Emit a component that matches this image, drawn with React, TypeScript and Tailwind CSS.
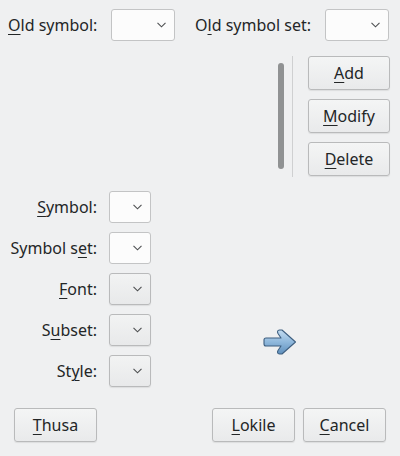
import React from 'react';

const font = { fontFamily: '"Noto Sans", "DejaVu Sans", sans-serif' };

function Chevron() {
  return (
    <svg width="9" height="6" viewBox="0 0 9 6" className="shrink-0">
      <path d="M0.5 0.8 L4.5 4.8 L8.5 0.8" fill="none" stroke="#4d4f51" strokeWidth="1.1" />
    </svg>
  );
}

function Mnemonic({ text, at }: { text: string; at: number }) {
  return (
    <>
      {text.slice(0, at)}
      <span className="underline underline-offset-[3px] decoration-1">{text[at]}</span>
      {text.slice(at + 1)}
    </>
  );
}

function Combo({ editable, className = '' }: { editable?: boolean; className?: string }) {
  return (
    <div
      className={`flex items-center justify-end pr-[8px] h-[32px] rounded-[3px] border ${
        editable
          ? 'bg-[#fcfcfc] border-[#c3c4c5]'
          : 'bg-gradient-to-b from-[#f2f3f3] to-[#e8e9ea] border-[#b9babb] shadow-[0_1px_1px_rgba(0,0,0,0.08)]'
      } ${className}`}
    >
      <Chevron />
    </div>
  );
}

function Button({ label, at, className = '' }: { label: string; at: number; className?: string }) {
  return (
    <button
      className={`h-[34px] rounded-[3px] border border-[#b9babb] bg-gradient-to-b from-[#f4f5f5] to-[#e9eaeb] shadow-[0_1px_1px_rgba(0,0,0,0.08)] text-[16px] text-[#232627] ${className}`}
    >
      <Mnemonic text={label} at={at} />
    </button>
  );
}

function Arrow() {
  return (
    <svg width="34" height="30" viewBox="0 0 34 30">
      <defs>
        <linearGradient id="ag" x1="0" y1="0" x2="0" y2="1">
          <stop offset="0" stopColor="#c4dcf0" />
          <stop offset="0.5" stopColor="#8fb8dc" />
          <stop offset="1" stopColor="#5f90bd" />
        </linearGradient>
      </defs>
      <path
        d="M3 11 H18 L15 6.5 Q13.5 3.5 16.5 3 L19 3 L32.5 15 L19 27 L16.5 27 Q13.5 26.5 15 23.5 L18 19 H3 Q1 19 1 17 V13 Q1 11 3 11 Z"
        fill="url(#ag)"
        stroke="#3e5f80"
        strokeWidth="1.1"
        strokeLinejoin="round"
      />
    </svg>
  );
}

const rows: { label: string; at: number; editable: boolean }[] = [
  { label: 'Symbol:', at: 0, editable: true },
  { label: 'Symbol set:', at: 8, editable: true },
  { label: 'Font:', at: 0, editable: false },
  { label: 'Subset:', at: 1, editable: false },
  { label: 'Style:', at: 2, editable: false },
];

export default function App() {
  return (
    <div className="w-[400px] h-[456px] bg-[#eff0f1] text-[#232627] text-[16px] flex flex-col" style={font}>
      {/* top row */}
      <div className="flex items-center pt-[9px] pl-[8px] h-[41px]">
        <span className="w-[103px]">
          <Mnemonic text="Old symbol:" at={0} />
        </span>
        <Combo editable className="w-[64px]" />
        <span className="ml-[20px] w-[130px]">
          <Mnemonic text="Old symbol set:" at={1} />
        </span>
        <Combo editable className="w-[64px]" />
      </div>

      {/* list + buttons */}
      <div className="flex mt-[15px] h-[121px]">
        <div className="flex-1" />
        <div className="w-[6px] mt-[7px] h-[106px] rounded-[3px] bg-[#909293]" />
        <div className="w-px ml-[8px] bg-[#cfd0d1]" />
        <div className="flex flex-col gap-[9px] ml-[15px] w-[82px] mr-[10px]">
          <Button label="Add" at={0} />
          <Button label="Modify" at={0} />
          <Button label="Delete" at={0} />
        </div>
      </div>

      {/* form */}
      <div className="flex mt-[14px]">
        <div className="flex flex-col gap-[9px] w-[151px]">
          {rows.map((r) => (
            <div key={r.label} className="flex items-center h-[32px]">
              <span className="w-[97px] text-right whitespace-nowrap">
                <Mnemonic text={r.label} at={r.at} />
              </span>
              <Combo editable={r.editable} className="ml-[12px] w-[42px]" />
            </div>
          ))}
        </div>
        <div className="flex-1 flex justify-end items-end pb-[30px] pr-[103px]">
          <Arrow />
        </div>
      </div>

      {/* bottom buttons */}
      <div className="flex mt-[21px] px-[14px]">
        <Button label="Thusa" at={0} className="w-[83px]" />
        <div className="flex-1" />
        <Button label="Lokile" at={0} className="w-[83px]" />
        <Button label="Cancel" at={0} className="w-[83px] ml-[8px]" />
      </div>
    </div>
  );
}
